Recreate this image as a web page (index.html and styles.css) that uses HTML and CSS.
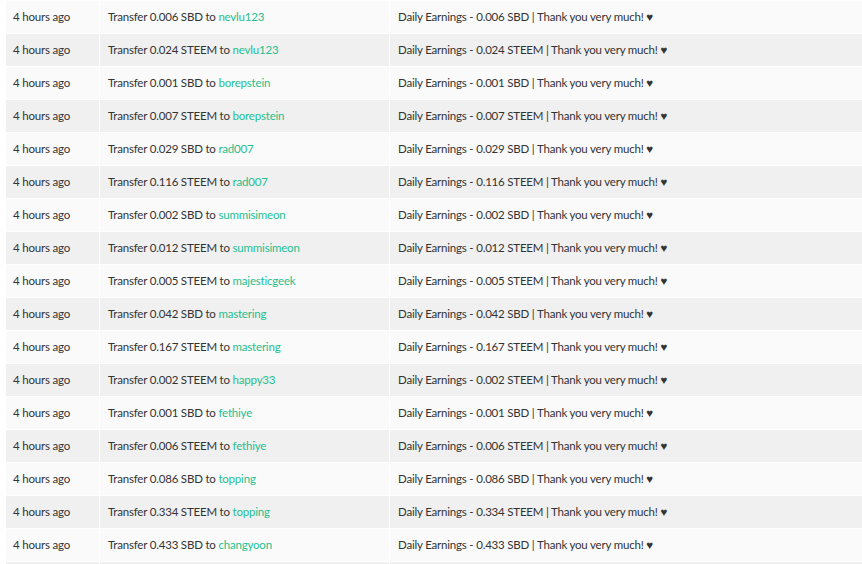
FILE: index.html
```html
<!DOCTYPE html>
<html>
<head>
<meta charset="utf-8">
<link rel="stylesheet" href="styles.css">
</head>
<body>
<div class="list">
  <div class="row"><div class="cell">4 hours ago</div><div class="cell">Transfer 0.006 SBD to <a>nevlu123</a></div><div class="cell">Daily Earnings - 0.006 SBD | Thank you very much! ♥</div></div>
  <div class="row"><div class="cell">4 hours ago</div><div class="cell">Transfer 0.024 STEEM to <a>nevlu123</a></div><div class="cell">Daily Earnings - 0.024 STEEM | Thank you very much! ♥</div></div>
  <div class="row"><div class="cell">4 hours ago</div><div class="cell">Transfer 0.001 SBD to <a>borepstein</a></div><div class="cell">Daily Earnings - 0.001 SBD | Thank you very much! ♥</div></div>
  <div class="row"><div class="cell">4 hours ago</div><div class="cell">Transfer 0.007 STEEM to <a>borepstein</a></div><div class="cell">Daily Earnings - 0.007 STEEM | Thank you very much! ♥</div></div>
  <div class="row"><div class="cell">4 hours ago</div><div class="cell">Transfer 0.029 SBD to <a>rad007</a></div><div class="cell">Daily Earnings - 0.029 SBD | Thank you very much! ♥</div></div>
  <div class="row"><div class="cell">4 hours ago</div><div class="cell">Transfer 0.116 STEEM to <a>rad007</a></div><div class="cell">Daily Earnings - 0.116 STEEM | Thank you very much! ♥</div></div>
  <div class="row"><div class="cell">4 hours ago</div><div class="cell">Transfer 0.002 SBD to <a>summisimeon</a></div><div class="cell">Daily Earnings - 0.002 SBD | Thank you very much! ♥</div></div>
  <div class="row"><div class="cell">4 hours ago</div><div class="cell">Transfer 0.012 STEEM to <a>summisimeon</a></div><div class="cell">Daily Earnings - 0.012 STEEM | Thank you very much! ♥</div></div>
  <div class="row"><div class="cell">4 hours ago</div><div class="cell">Transfer 0.005 STEEM to <a>majesticgeek</a></div><div class="cell">Daily Earnings - 0.005 STEEM | Thank you very much! ♥</div></div>
  <div class="row"><div class="cell">4 hours ago</div><div class="cell">Transfer 0.042 SBD to <a>mastering</a></div><div class="cell">Daily Earnings - 0.042 SBD | Thank you very much! ♥</div></div>
  <div class="row"><div class="cell">4 hours ago</div><div class="cell">Transfer 0.167 STEEM to <a>mastering</a></div><div class="cell">Daily Earnings - 0.167 STEEM | Thank you very much! ♥</div></div>
  <div class="row"><div class="cell">4 hours ago</div><div class="cell">Transfer 0.002 STEEM to <a>happy33</a></div><div class="cell">Daily Earnings - 0.002 STEEM | Thank you very much! ♥</div></div>
  <div class="row"><div class="cell">4 hours ago</div><div class="cell">Transfer 0.001 SBD to <a>fethiye</a></div><div class="cell">Daily Earnings - 0.001 SBD | Thank you very much! ♥</div></div>
  <div class="row"><div class="cell">4 hours ago</div><div class="cell">Transfer 0.006 STEEM to <a>fethiye</a></div><div class="cell">Daily Earnings - 0.006 STEEM | Thank you very much! ♥</div></div>
  <div class="row"><div class="cell">4 hours ago</div><div class="cell">Transfer 0.086 SBD to <a>topping</a></div><div class="cell">Daily Earnings - 0.086 SBD | Thank you very much! ♥</div></div>
  <div class="row"><div class="cell">4 hours ago</div><div class="cell">Transfer 0.334 STEEM to <a>topping</a></div><div class="cell">Daily Earnings - 0.334 STEEM | Thank you very much! ♥</div></div>
  <div class="row"><div class="cell">4 hours ago</div><div class="cell">Transfer 0.433 SBD to <a>changyoon</a></div><div class="cell">Daily Earnings - 0.433 SBD | Thank you very much! ♥</div></div>
  <div class="row"><div class="cell"></div><div class="cell"></div><div class="cell"></div></div>
</div>
</body>
</html>
```
FILE: styles.css
```css
html, body {
  margin: 0;
  background: #ffffff;
  overflow: hidden;
}
body {
  padding: 1px 0 0 6px;
  font-family: Lato, "Liberation Sans", sans-serif;
  font-size: 11.5px;
  letter-spacing: -0.2px;
  color: #333333;
}
.list {
  display: flex;
  flex-direction: column;
  gap: 1px;
}
.row {
  display: grid;
  grid-template-columns: 93px 289px 1fr;
  gap: 1px;
  height: 32px;
}
.cell {
  background: #fafafa;
  padding: 0 0 2px 8px;
  display: flex;
  align-items: center;
  white-space: pre;
}
.cell:first-child {
  padding-left: 7px;
}
.row:nth-child(even) .cell {
  background: #f0f0f0;
}
.cell a {
  color: #1fbf8f;
}
```
